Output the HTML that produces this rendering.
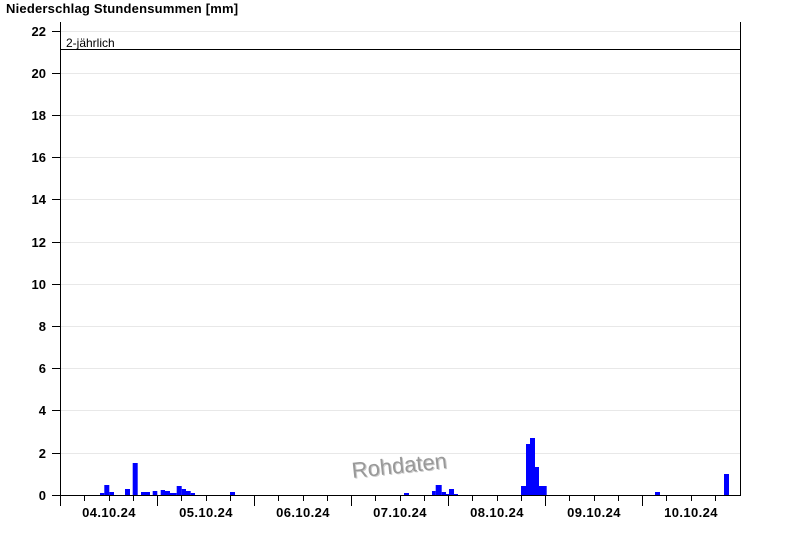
<!DOCTYPE html>
<html><head><meta charset="utf-8"><style>
html,body{margin:0;padding:0;background:#fff;}
svg{display:block;font-family:"Liberation Sans",Arial,sans-serif;}
</style></head><body>
<svg width="800" height="550" xmlns="http://www.w3.org/2000/svg">
<rect width="800" height="550" fill="#fff"/>
<text x="6" y="13" font-size="13" font-weight="bold" fill="#000" letter-spacing="0.2">Niederschlag Stundensummen [mm]</text>
<g stroke="#e8e8e8" stroke-width="1">
<line x1="60" x2="740" y1="31.5" y2="31.5"/>
<line x1="60" x2="740" y1="73.5" y2="73.5"/>
<line x1="60" x2="740" y1="115.5" y2="115.5"/>
<line x1="60" x2="740" y1="157.5" y2="157.5"/>
<line x1="60" x2="740" y1="199.5" y2="199.5"/>
<line x1="60" x2="740" y1="242.5" y2="242.5"/>
<line x1="60" x2="740" y1="284.5" y2="284.5"/>
<line x1="60" x2="740" y1="326.5" y2="326.5"/>
<line x1="60" x2="740" y1="368.5" y2="368.5"/>
<line x1="60" x2="740" y1="410.5" y2="410.5"/>
<line x1="60" x2="740" y1="453.5" y2="453.5"/>
</g>
<g font-size="13" font-weight="bold" text-anchor="end" fill="#000">
<text x="46" y="36">22</text><text x="46" y="78">20</text><text x="46" y="120">18</text>
<text x="46" y="162">16</text><text x="46" y="204">14</text><text x="46" y="247">12</text>
<text x="46" y="289">10</text><text x="46" y="331">8</text><text x="46" y="373">6</text>
<text x="46" y="415">4</text><text x="46" y="458">2</text><text x="46" y="500">0</text>
</g>
<g stroke="#000" stroke-width="1">
<line x1="52" x2="60" y1="31.5" y2="31.5"/><line x1="52" x2="60" y1="73.5" y2="73.5"/>
<line x1="52" x2="60" y1="115.5" y2="115.5"/><line x1="52" x2="60" y1="157.5" y2="157.5"/>
<line x1="52" x2="60" y1="199.5" y2="199.5"/><line x1="52" x2="60" y1="242.5" y2="242.5"/>
<line x1="52" x2="60" y1="284.5" y2="284.5"/><line x1="52" x2="60" y1="326.5" y2="326.5"/>
<line x1="52" x2="60" y1="368.5" y2="368.5"/><line x1="52" x2="60" y1="410.5" y2="410.5"/>
<line x1="52" x2="60" y1="453.5" y2="453.5"/><line x1="52" x2="60" y1="495.5" y2="495.5"/>
</g>
<g fill="#0000ff">
<rect x="100" y="493" width="4.3" height="2"/>
<rect x="104.3" y="485" width="5" height="10"/>
<rect x="109.3" y="492" width="4.7" height="3"/>
<rect x="125" y="489" width="5" height="6"/>
<rect x="132.7" y="463" width="5" height="32"/>
<rect x="141" y="492" width="9" height="3"/>
<rect x="152.7" y="491" width="4.6" height="4"/>
<rect x="160.7" y="490" width="4.3" height="5"/>
<rect x="165" y="491" width="5" height="4"/>
<rect x="170" y="493" width="6.7" height="2"/>
<rect x="176.7" y="486" width="5" height="9"/>
<rect x="181.7" y="489" width="4.3" height="6"/>
<rect x="186" y="491" width="4.7" height="4"/>
<rect x="190.7" y="493" width="4.3" height="2"/>
<rect x="230" y="492" width="5" height="3"/>
<rect x="404" y="493" width="5" height="2"/>
<rect x="432" y="491" width="3.7" height="4"/>
<rect x="435.7" y="485" width="6" height="10"/>
<rect x="441.7" y="492" width="4.3" height="3"/>
<rect x="446" y="494" width="3" height="1"/>
<rect x="449" y="489" width="5" height="6"/>
<rect x="454" y="494" width="4" height="1"/>
<rect x="521" y="486" width="5" height="9"/>
<rect x="526" y="444" width="4" height="51"/>
<rect x="530" y="438" width="5" height="57"/>
<rect x="535" y="467" width="4" height="28"/>
<rect x="539" y="486" width="7.7" height="9"/>
<rect x="655" y="492" width="5" height="3"/>
<rect x="724" y="474" width="5" height="21"/>
</g>
<line x1="60" x2="740" y1="49.5" y2="49.5" stroke="#000" stroke-width="1"/>
<text x="66" y="47" font-size="12" fill="#000">2-jährlich</text>
<line x1="60.5" x2="60.5" y1="22" y2="495" stroke="#000"/>
<line x1="740.5" x2="740.5" y1="22" y2="496" stroke="#000"/>
<line x1="60" x2="741" y1="495.5" y2="495.5" stroke="#000"/>
<g stroke="#000" stroke-width="1">
<line x1="60.5" x2="60.5" y1="495" y2="506"/><line x1="157.5" x2="157.5" y1="495" y2="506"/>
<line x1="254.5" x2="254.5" y1="495" y2="506"/><line x1="351.5" x2="351.5" y1="495" y2="506"/>
<line x1="448.5" x2="448.5" y1="495" y2="506"/><line x1="545.5" x2="545.5" y1="495" y2="506"/>
<line x1="642.5" x2="642.5" y1="495" y2="506"/>
<line x1="84.5" x2="84.5" y1="495" y2="501"/><line x1="109.5" x2="109.5" y1="495" y2="501"/><line x1="133.5" x2="133.5" y1="495" y2="501"/>
<line x1="181.5" x2="181.5" y1="495" y2="501"/><line x1="206.5" x2="206.5" y1="495" y2="501"/><line x1="230.5" x2="230.5" y1="495" y2="501"/>
<line x1="278.5" x2="278.5" y1="495" y2="501"/><line x1="303.5" x2="303.5" y1="495" y2="501"/><line x1="327.5" x2="327.5" y1="495" y2="501"/>
<line x1="375.5" x2="375.5" y1="495" y2="501"/><line x1="400.5" x2="400.5" y1="495" y2="501"/><line x1="424.5" x2="424.5" y1="495" y2="501"/>
<line x1="472.5" x2="472.5" y1="495" y2="501"/><line x1="497.5" x2="497.5" y1="495" y2="501"/><line x1="521.5" x2="521.5" y1="495" y2="501"/>
<line x1="569.5" x2="569.5" y1="495" y2="501"/><line x1="594.5" x2="594.5" y1="495" y2="501"/><line x1="618.5" x2="618.5" y1="495" y2="501"/>
<line x1="666.5" x2="666.5" y1="495" y2="501"/><line x1="691.5" x2="691.5" y1="495" y2="501"/><line x1="715.5" x2="715.5" y1="495" y2="501"/>
</g>
<g font-size="13" font-weight="bold" text-anchor="middle" fill="#000" letter-spacing="0.4">
<text x="109" y="517">04.10.24</text><text x="206" y="517">05.10.24</text>
<text x="303" y="517">06.10.24</text><text x="400" y="517">07.10.24</text>
<text x="497" y="517">08.10.24</text><text x="594" y="517">09.10.24</text>
<text x="691" y="517">10.10.24</text>
</g>
<g transform="translate(400,473) rotate(-6)" font-size="22" text-anchor="middle">
<text x="1" y="1" fill="#ccc">Rohdaten</text>
<text x="0" y="0" fill="#999">Rohdaten</text>
</g>
</svg>
</body></html>
